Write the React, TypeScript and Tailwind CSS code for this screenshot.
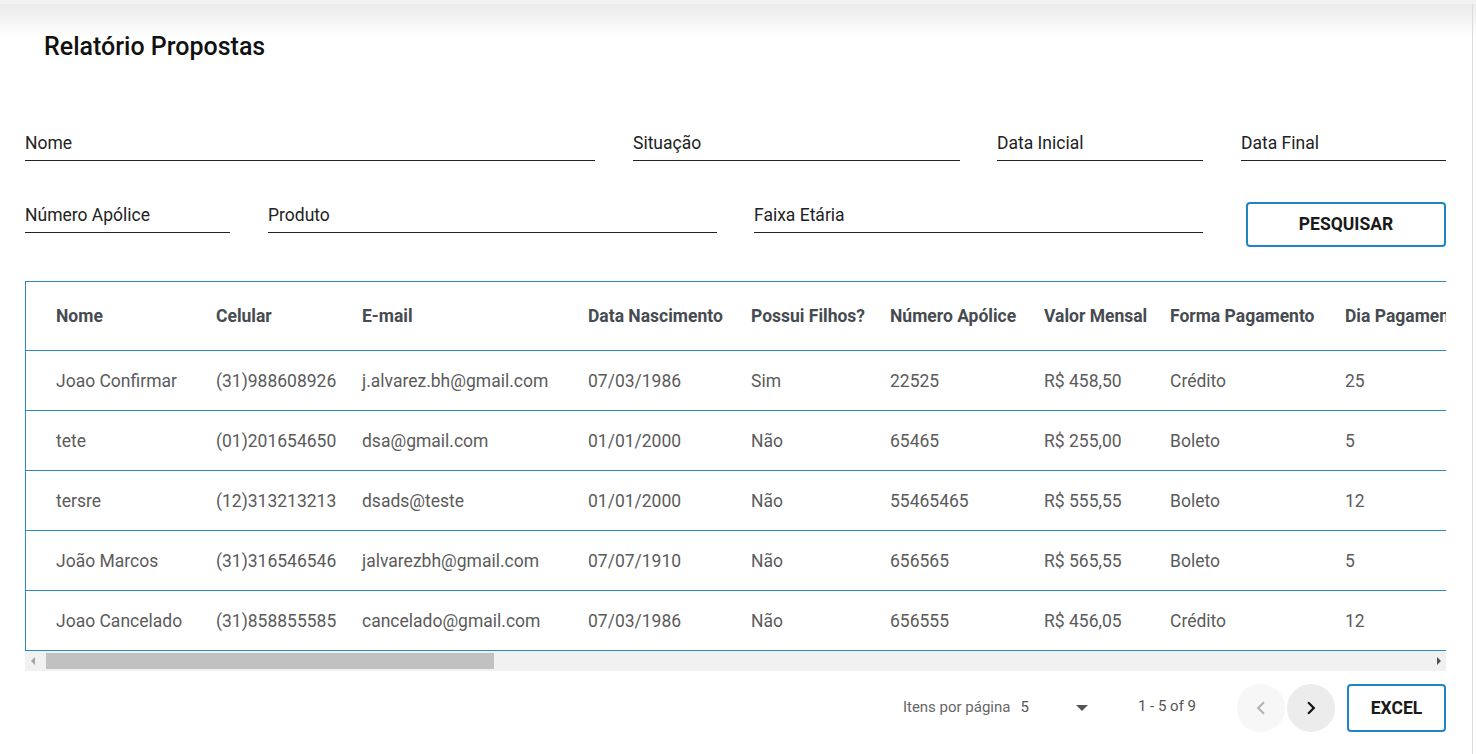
import React from 'react';

const cols = [
  { key: 'nome', label: 'Nome', w: 'w-[190px] pl-[30px]' },
  { key: 'cel', label: 'Celular', w: 'w-[146px]' },
  { key: 'email', label: 'E-mail', w: 'w-[226px]' },
  { key: 'nasc', label: 'Data Nascimento', w: 'w-[163px]' },
  { key: 'filhos', label: 'Possui Filhos?', w: 'w-[139px]' },
  { key: 'apolice', label: 'Número Apólice', w: 'w-[154px]' },
  { key: 'valor', label: 'Valor Mensal', w: 'w-[126px]' },
  { key: 'forma', label: 'Forma Pagamento', w: 'w-[175px]' },
  { key: 'dia', label: 'Dia Pagamento', w: 'w-[160px]' },
];

const rows = [
  ['Joao Confirmar', '(31)988608926', 'j.alvarez.bh@gmail.com', '07/03/1986', 'Sim', '22525', 'R$ 458,50', 'Crédito', '25'],
  ['tete', '(01)201654650', 'dsa@gmail.com', '01/01/2000', 'Não', '65465', 'R$ 255,00', 'Boleto', '5'],
  ['tersre', '(12)313213213', 'dsads@teste', '01/01/2000', 'Não', '55465465', 'R$ 555,55', 'Boleto', '12'],
  ['João Marcos', '(31)316546546', 'jalvarezbh@gmail.com', '07/07/1910', 'Não', '656565', 'R$ 565,55', 'Boleto', '5'],
  ['Joao Cancelado', '(31)858855585', 'cancelado@gmail.com', '07/03/1986', 'Não', '656555', 'R$ 456,05', 'Crédito', '12'],
];

function Field({ label, className }: { label: string; className: string }) {
  return (
    <div className={`${className} border-b border-[#222] pb-[7px]`}>
      <span className="block text-[17.5px] leading-[20px] text-[#222]">{label}</span>
    </div>
  );
}

export default function App() {
  return (
    <div className="relative w-[1476px] h-[754px] overflow-hidden bg-white font-['Roboto',sans-serif]">
      <div className="absolute left-0 top-0 w-full h-[4px] bg-[#f2f2f2]" />
      <div className="absolute left-0 top-[4px] w-full h-[34px] bg-gradient-to-b from-[#ebebeb] to-white" />
      <div className="absolute left-[1472px] top-[4px] w-[1px] h-full bg-[#dcdcdc]" />

      <div className="relative pl-[25px] pr-[30px]">
        <h1 className="pt-[33px] pl-[19px] text-[25px] leading-[28px] font-medium text-[#111]">Relatório Propostas</h1>

        <div className="mt-[72px] flex">
          <Field label="Nome" className="w-[570px]" />
          <Field label="Situação" className="ml-[38px] w-[327px]" />
          <Field label="Data Inicial" className="ml-[37px] w-[206px]" />
          <Field label="Data Final" className="ml-[38px] w-[205px]" />
        </div>

        <div className="mt-[41px] flex items-start">
          <Field label="Número Apólice" className="mt-[3px] w-[205px]" />
          <Field label="Produto" className="mt-[3px] ml-[38px] w-[449px]" />
          <Field label="Faixa Etária" className="mt-[3px] ml-[37px] w-[449px]" />
          <button className="ml-[43px] w-[200px] h-[45px] border-2 border-[#1f86c6] rounded-[4px] text-[17.5px] font-bold text-[#1a1a1a] bg-white">
            PESQUISAR
          </button>
        </div>

        <div className="mt-[34px] w-[1421px] overflow-hidden border-l border-t border-[#2a88c4]">
          <div className="w-max">
            <div className="flex h-[69px] items-center border-b border-[#2a88c4]">
              {cols.map((c) => (
                <div key={c.key} className={`${c.w} shrink-0 text-[17.5px] font-bold text-[#464b51] whitespace-nowrap`}>
                  {c.label}
                </div>
              ))}
            </div>
            {rows.map((r, i) => (
              <div key={i} className="flex h-[60px] items-center border-b border-[#2a88c4]">
                {r.map((v, j) => (
                  <div key={j} className={`${cols[j].w} shrink-0 pt-[2px] text-[17.5px] text-[#5b5b5b] whitespace-nowrap`}>
                    {v}
                  </div>
                ))}
              </div>
            ))}
          </div>
        </div>

        <div className="w-[1421px] h-[20px] bg-[#f1f1f1] flex items-center">
          <div className="w-[15px] flex justify-center">
            <div className="w-0 h-0 border-y-[4px] border-y-transparent border-r-[4px] border-r-[#a3a3a3]" />
          </div>
          <div className="ml-[6px] w-[448px] h-[16px] bg-[#c1c1c1]" />
          <div className="flex-1" />
          <div className="w-[15px] flex justify-center">
            <div className="w-0 h-0 border-y-[4px] border-y-transparent border-l-[4px] border-l-[#505050]" />
          </div>
        </div>

        <div className="mt-[13px] flex items-center justify-end">
          <span className="mb-[1px] text-[15px] text-[#666]">Itens por página</span>
          <span className="mb-[1px] ml-[10px] text-[15px] text-[#555]">5</span>
          <div className="ml-[47px] w-0 h-0 border-x-[6px] border-x-transparent border-t-[6px] border-t-[#555]" />
          <span className="ml-[50px] mb-[4px] text-[15px] text-[#555]">1 - 5 of 9</span>
          <div className="ml-[41px] w-[48px] h-[48px] rounded-full bg-[#f7f7f7] flex items-center justify-center">
            <svg width="26" height="26" viewBox="0 0 24 24"><path d="M15.41 7.41 14 6l-6 6 6 6 1.41-1.41L10.83 12z" fill="#b5b5b5" /></svg>
          </div>
          <div className="ml-[2px] w-[48px] h-[48px] rounded-full bg-[#ececec] flex items-center justify-center">
            <svg width="26" height="26" viewBox="0 0 24 24"><path d="M10 6 8.59 7.41 13.17 12l-4.58 4.59L10 18l6-6z" fill="#111" /></svg>
          </div>
          <button className="ml-[12px] w-[99px] h-[48px] border-2 border-[#1f86c6] rounded-[4px] text-[17.5px] font-bold text-[#1a1a1a] bg-white">
            EXCEL
          </button>
        </div>
      </div>
    </div>
  );
}
